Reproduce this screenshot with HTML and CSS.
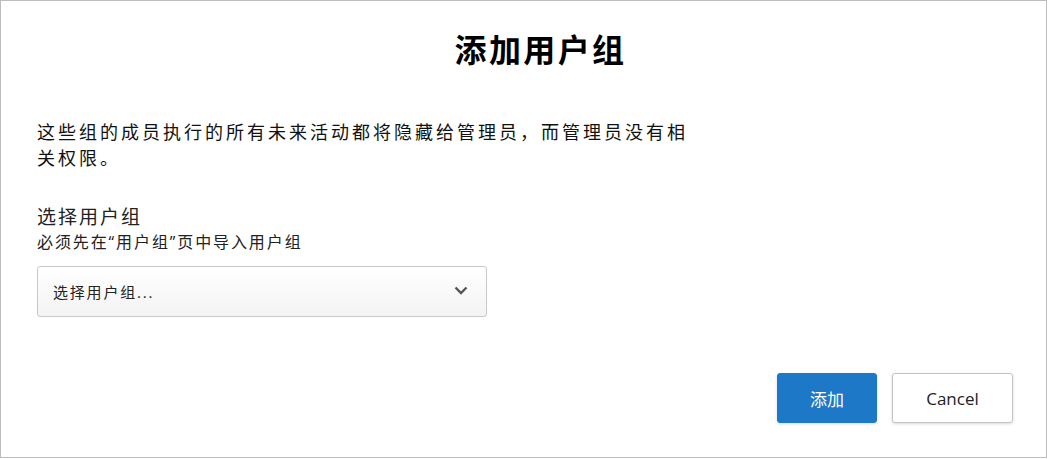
FILE: index.html
```html
<!DOCTYPE html>
<html>
<head>
    <meta charset="utf-8">
    <title>添加用户组</title>
    <link rel="stylesheet" href="styles.css">
</head>
<body>

<div class="dialog">
    <h1 class="title">添加用户组</h1>

    <p class="intro">这些组的成员执行的所有未来活动都将隐藏给管理员，而管理员没有相关权限。</p>

    <div class="field">
        <div class="label">选择用户组</div>
        <div class="hint">必须先在“用户组”页中导入用户组</div>

        <div class="select">
            <span>选择用户组...</span>
            <svg width="14" height="9" viewBox="0 0 14 9">
                <path d="M1.5 1.5 L7 7 L12.5 1.5" fill="none" stroke="#555" stroke-width="2.4"/>
            </svg>
        </div>
    </div>

    <div class="actions">
        <button class="btn btn-primary">添加</button>
        <button class="btn">Cancel</button>
    </div>
</div>

</body>
</html>
```

FILE: styles.css
```css
html, body {
    margin: 0;
    padding: 0;
    background: white;
}
body {
    font-family: "Segoe UI", "Open Sans", "Noto Sans CJK SC", sans-serif;
    color: #222;
}

.dialog {
    box-sizing: border-box;
    width: 1047px;
    height: 458px;
    border: 1px solid #bdbdbd;
    padding: 0 33px 0 36px;
    display: flex;
    flex-direction: column;
}

.title {
    margin: 27px 0 0;
    padding-left: 31px;
    text-align: center;
    font-size: 32px;
    line-height: 44px;
    letter-spacing: 2.4px;
    font-weight: bold;
    color: #000;
}

.intro {
    width: 660px;
    margin: 47px 0 0;
    font-size: 18px;
    line-height: 26px;
    letter-spacing: 3px;
    color: #111;
}

.field {
    margin-top: 33px;
}
.label {
    font-size: 19px;
    line-height: 26px;
    letter-spacing: 2px;
}
.hint {
    margin-top: 1px;
    font-size: 16px;
    line-height: 22px;
    letter-spacing: 1.9px;
}

.select {
    box-sizing: border-box;
    width: 450px;
    height: 51px;
    margin-top: 13px;
    padding: 0 18px 0 15px;
    border: 1px solid #c8c8c8;
    border-radius: 3px;
    background: linear-gradient(#ffffff, #f3f3f3);
    display: flex;
    align-items: center;
    justify-content: space-between;
    font-size: 15px;
    letter-spacing: 1.8px;
    color: #222;
}
.select svg {
    margin-top: -3px;
}

.actions {
    margin-top: auto;
    margin-bottom: 34px;
    display: flex;
    justify-content: flex-end;
    gap: 15px;
}

.btn {
    width: 121px;
    height: 50px;
    border: 1px solid #c4c4c4;
    border-radius: 3px;
    background: white;
    box-shadow: 0 1px 3px rgba(0, 0, 0, 0.15);
    font-family: inherit;
    font-size: 17px;
    color: #222;
}
.btn-primary {
    width: 100px;
    background: #1e78c8;
    border-color: #1e78c8;
    color: white;
}
```
